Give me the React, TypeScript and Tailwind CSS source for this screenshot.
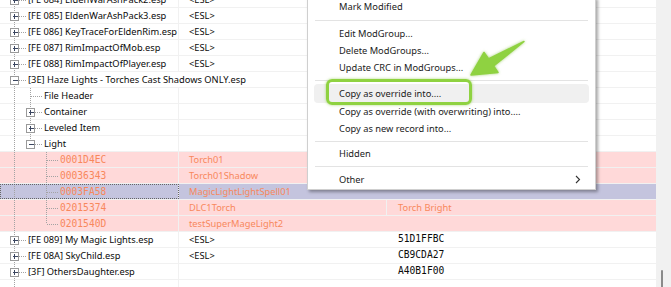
import React from 'react';

type Kind = 'normal' | 'pink' | 'purple';

type Row = {
    level: number;
    guides: boolean[];
    conn: 'tee' | 'ell';
    box?: 'plus' | 'minus';
    label: string;
    mono?: boolean;
    col2?: string;
    col3?: string;
    col3Mono?: boolean;
    kind?: Kind;
    overflow?: boolean;
    sep3?: boolean;
};

const rows: Row[] = [
    { level: 0, guides: [], conn: 'tee', box: 'plus', label: '[FE 084] EldenWarAshPack2.esp', col2: '<ESL>' },
    { level: 0, guides: [], conn: 'tee', box: 'plus', label: '[FE 085] EldenWarAshPack3.esp', col2: '<ESL>' },
    { level: 0, guides: [], conn: 'tee', box: 'plus', label: '[FE 086] KeyTraceForEldenRim.esp', col2: '<ESL>' },
    { level: 0, guides: [], conn: 'tee', box: 'plus', label: '[FE 087] RimImpactOfMob.esp', col2: '<ESL>' },
    { level: 0, guides: [], conn: 'tee', box: 'plus', label: '[FE 088] RimImpactOfPlayer.esp', col2: '<ESL>' },
    { level: 0, guides: [], conn: 'tee', box: 'minus', label: '[3E] Haze Lights - Torches Cast Shadows ONLY.esp', overflow: true },
    { level: 1, guides: [true], conn: 'tee', label: 'File Header' },
    { level: 1, guides: [true], conn: 'tee', box: 'plus', label: 'Container' },
    { level: 1, guides: [true], conn: 'tee', box: 'plus', label: 'Leveled Item' },
    { level: 1, guides: [true], conn: 'ell', box: 'minus', label: 'Light' },
    { level: 2, guides: [true, false], conn: 'tee', label: '0001D4EC', mono: true, col2: 'Torch01', kind: 'pink' },
    { level: 2, guides: [true, false], conn: 'tee', label: '00036343', mono: true, col2: 'Torch01Shadow', kind: 'pink' },
    { level: 2, guides: [true, false], conn: 'tee', label: '0003FA58', mono: true, col2: 'MagicLightLightSpell01', kind: 'purple' },
    { level: 2, guides: [true, false], conn: 'tee', label: '02015374', mono: true, col2: 'DLC1Torch', col3: 'Torch Bright', kind: 'pink', sep3: true },
    { level: 2, guides: [true, false], conn: 'ell', label: '0201540D', mono: true, col2: 'testSuperMageLight2', kind: 'pink' },
    { level: 0, guides: [], conn: 'tee', box: 'plus', label: '[FE 089] My Magic Lights.esp', col2: '<ESL>', col3: '51D1FFBC', col3Mono: true },
    { level: 0, guides: [], conn: 'tee', box: 'plus', label: '[FE 08A] SkyChild.esp', col2: '<ESL>', col3: 'CB9CDA27', col3Mono: true },
    { level: 0, guides: [], conn: 'tee', box: 'plus', label: '[3F] OthersDaughter.esp', col3: 'A40B1F00', col3Mono: true },
    { level: 0, guides: [], conn: 'tee', label: '' },
];

const sans = "font-['Noto_Sans',sans-serif] text-[9.3px]";
const mono = "font-['DejaVu_Sans_Mono',monospace] text-[9.6px]";

// tree guide lines for one row
const Guides: React.FC<{ row: Row }> = ({ row }) => {
    const w = 26 + 16 * row.level;
    const x = 14.5 + 16 * row.level;
    return (
        <svg width={w} height={16} className="shrink-0" shapeRendering="crispEdges">
            <g stroke="#a3a3a3" strokeWidth={1} strokeDasharray="1 1" fill="none">
                {row.guides.map((g, i) =>
                    g ? <line key={i} x1={14.5 + 16 * i} y1={0} x2={14.5 + 16 * i} y2={16} /> : null
                )}
                <line x1={x} y1={0} x2={x} y2={row.conn === 'tee' ? 16 : 8} />
                <line x1={x} y1={8.5} x2={w} y2={8.5} />
            </g>
            {row.box && (
                <g>
                    <rect x={x - 4} y={4.5} width={8} height={8} fill="#fff" stroke="#9a9a9a" />
                    <line x1={x - 2} y1={8.5} x2={x + 3} y2={8.5} stroke="#3b4660" />
                    {row.box === 'plus' && <line x1={x} y1={6} x2={x} y2={11} stroke="#3b4660" />}
                </g>
            )}
        </svg>
    );
};

const TreeRow: React.FC<{ row: Row }> = ({ row }) => {
    const kind = row.kind ?? 'normal';
    const bg = kind === 'pink' ? 'bg-[#ffd9d9]' : kind === 'purple' ? 'bg-[#c4c4de]' : 'bg-white';
    const color = kind === 'normal' ? 'text-[#0a0a0a]' : 'text-[#f8885c]';
    return (
        <div className={`flex h-[16px] shrink-0 border-b border-[#f1f1f1] ${bg}`}>
            <div
                className={`flex w-[179px] shrink-0 items-center ${row.overflow ? '' : 'overflow-hidden border-r border-[#f1f1f1]'} ${kind === 'purple' ? 'outline outline-1 outline-dotted outline-[#666] -outline-offset-1' : ''}`}
            >
                <Guides row={row} />
                <span className={`ml-[2px] whitespace-nowrap leading-[16px] ${row.mono ? mono : sans} ${color}`}>
                    {row.label}
                </span>
            </div>
            <div className={`flex w-[208px] shrink-0 items-center pl-[10px] ${row.sep3 ? 'border-r border-[#f1f1f1]' : ''}`}>
                <span className={`${sans} whitespace-nowrap ${color}`}>{row.col2}</span>
            </div>
            <div className="flex flex-1 items-center pl-[11px]">
                <span className={`whitespace-nowrap ${row.col3Mono ? mono : sans} ${color}`}>{row.col3}</span>
            </div>
        </div>
    );
};

const MenuItem: React.FC<{ label: string; h?: string; active?: boolean; sub?: boolean }> = ({ label, h = 'h-[17px]', active, sub }) => (
    <div className={`mx-[6px] flex items-center justify-between rounded-[4px] pl-[25px] pr-[8px] ${h} ${active ? 'bg-[#f0f0f0]' : ''}`}>
        <span className={`${sans} leading-[17px] text-[#1b1b1b] whitespace-nowrap`}>{label}</span>
        {sub && (
            <svg width="6" height="9" viewBox="0 0 6 9">
                <path d="M1 1l3.5 3.5L1 8" stroke="#333" strokeWidth="1.1" fill="none" />
            </svg>
        )}
    </div>
);

const Sep: React.FC<{ h: string }> = ({ h }) => (
    <div className={`mx-[7px] flex items-center ${h}`}>
        <div className="h-px w-full bg-[#e3e3e3]" />
    </div>
);

const App: React.FC = () => {
    return (
        <div className="relative flex h-[287px] w-[671px] overflow-hidden bg-white">
            {/* tree grid */}
            <div className="flex w-[656px] shrink-0 flex-col -mt-[8px]">
                {rows.map((r, i) => (
                    <TreeRow key={i} row={r} />
                ))}
            </div>

            {/* scrollbar */}
            <div className="relative w-[15px] shrink-0 bg-[#f1f1f1]">
                <div className="absolute left-[5px] top-[270px] h-[20px] w-[2px] rounded-full bg-[#8a8a8a]" />
            </div>

            {/* context menu */}
            <div className="absolute left-[307px] top-[-3px] w-[289px] border border-[#cfcfcf] bg-white pb-[1px] shadow-[2px_2px_3px_rgba(0,0,0,0.35)]">
                <MenuItem label="Mark Modified" />
                <Sep h="h-[10px]" />
                <MenuItem label="Edit ModGroup..." />
                <MenuItem label="Delete ModGroups..." />
                <MenuItem label="Update CRC in ModGroups..." />
                <Sep h="h-[8px]" />
                <MenuItem label="Copy as override into...." h="h-[19px]" active />
                <MenuItem label="Copy as override (with overwriting) into...." />
                <MenuItem label="Copy as new record into..." />
                <Sep h="h-[8px]" />
                <MenuItem label="Hidden" />
                <Sep h="h-[9px]" />
                <MenuItem label="Other" sub />
            </div>

            {/* green highlight */}
            <div className="absolute left-[326px] top-[79px] h-[26px] w-[146px] rounded-[6px] border-[3px] border-[#8fd241] shadow-[0_0_3px_rgba(120,190,40,0.6)]" />
            <svg className="absolute left-[460px] top-[35px]" width="72" height="50" viewBox="460 35 72 50">
                <path
                    d="M471 75 L484 52.5 L488.5 58.8 L524 41.5 L493.6 66 L498 72.5 Z"
                    fill="#8fd241"
                    stroke="#8fd241"
                    strokeWidth="1.5"
                    strokeLinejoin="round"
                    style={{ filter: 'drop-shadow(0 0 1.5px rgba(110,180,30,0.6))' }}
                />
            </svg>
        </div>
    );
};

export default App;
